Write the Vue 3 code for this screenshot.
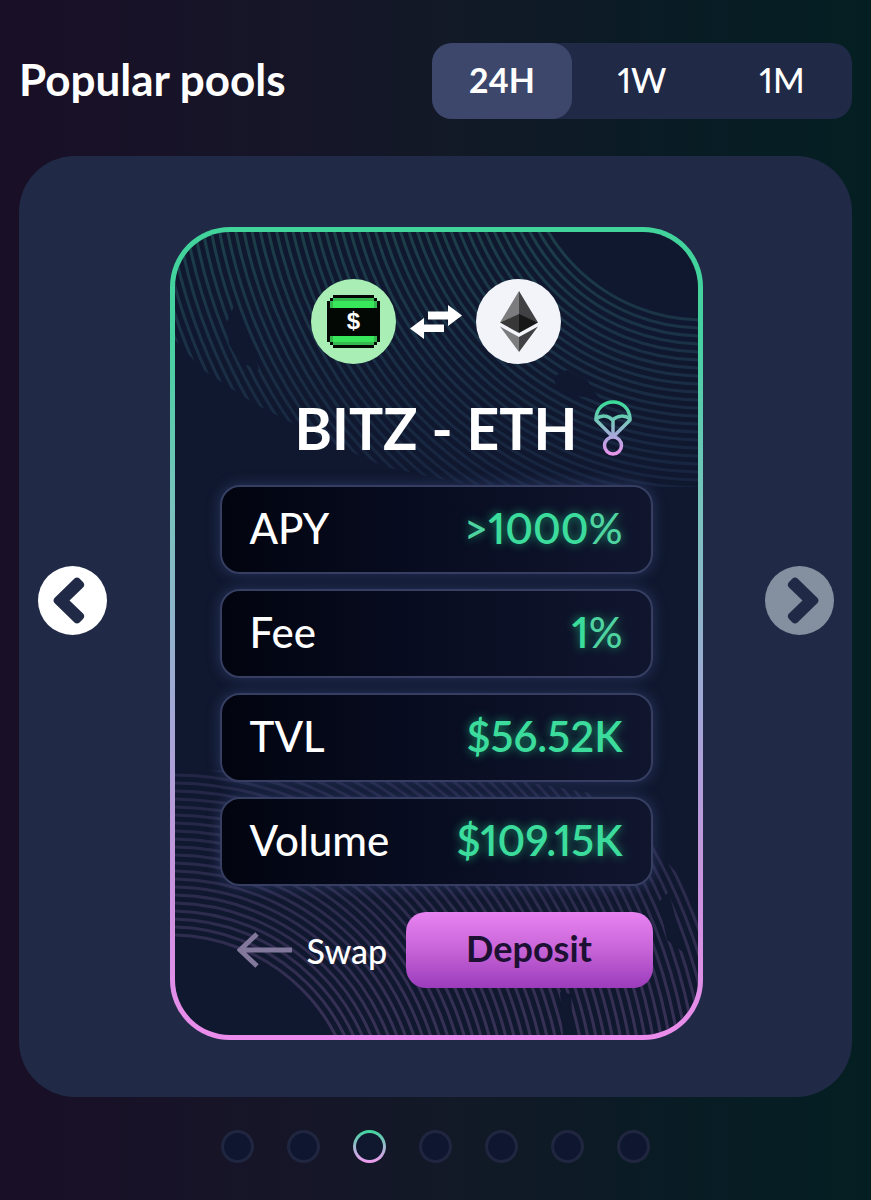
<script setup>
import { ref } from 'vue'

const periods = ['24H', '1W', '1M']
const period = ref('24H')
const slide = ref(2)
const stats = [
  { label: 'APY', prefix: '>', value: '1000', suffix: '%' },
  { label: 'Fee', prefix: '', value: '1', suffix: '%' },
  { label: 'TVL', prefix: '', value: '$56.52K', suffix: '' },
  { label: 'Volume', prefix: '', value: '$109.15K', suffix: '' }
]
const topRings = Array.from({ length: 49 }, (_, i) => 180 + i * 8)
const bottomRings = Array.from({ length: 48 }, (_, i) => 185 + i * 8)
</script>

<template>
  <main class="page">
    <header class="head">
      <h1>Popular pools</h1>
      <div class="tabs" role="group" aria-label="Period">
        <button
          v-for="p in periods"
          :key="p"
          type="button"
          :class="{ active: p === period }"
          :aria-pressed="p === period"
          @click="period = p"
        >{{ p }}</button>
      </div>
    </header>

    <section class="panel">
      <button class="nav" type="button" aria-label="Previous pool">
        <svg viewBox="0 0 69 69">
          <circle cx="34.5" cy="34.5" r="34.5" fill="#fff" />
          <path d="M36.5 12.5Q39 10.500 41.500 12.500L45 16Q47.500 19 45 21.500L31.500 34.500L45 47.500Q47.500 50 45 53L41.500 56.500Q39 58.500 36.500 56.500L16.500 37Q14.500 34.500 16.500 32Z" fill="#202a47" />
        </svg>
      </button>

      <article class="card">
        <svg class="waves" viewBox="0 0 523 803" preserveAspectRatio="none" aria-hidden="true">
          <defs>
            <linearGradient id="wt" gradientUnits="userSpaceOnUse" x1="0" y1="0" x2="0" y2="255">
              <stop offset="0" stop-color="#2c7a70" stop-opacity=".4" />
              <stop offset=".5" stop-color="#2c5c70" stop-opacity=".34" />
              <stop offset="1" stop-color="#34507a" stop-opacity=".2" />
            </linearGradient>
            <linearGradient id="wb" gradientUnits="userSpaceOnUse" x1="0" y1="540" x2="0" y2="803">
              <stop offset="0" stop-color="#5a5084" stop-opacity=".25" />
              <stop offset="1" stop-color="#7a5a96" stop-opacity=".38" />
            </linearGradient>
            <clipPath id="ct"><path d="M0 0H523V255L400 255L290 252L210 235L150 208L80 172L28 138L0 108Z" /></clipPath>
            <clipPath id="cb"><path d="M0 540L60 538L160 545L340 548L420 562L470 605L523 665V803H0Z" /></clipPath>
          </defs>
          <g clip-path="url(#ct)" fill="none" stroke="url(#wt)" stroke-width="3">
            <circle v-for="r in topRings" :key="r" cx="528" cy="-92" :r="r" />
          </g>
          <g clip-path="url(#cb)" fill="none" stroke="url(#wb)" stroke-width="3">
            <circle v-for="r in bottomRings" :key="r" cx="-4" cy="888" :r="r" />
          </g>
          <g fill="#10182f">
            <path d="M52 90L60 72L68 90L78 118L84 138L64 130L54 112Z" />
            <path d="M378 145L392 138L412 148L424 166L398 164L382 155Z" />
            <path d="M484 670L494 660L504 700L508 720L492 708Z" />
            <path d="M385 760L396 762L398 803H388Z" />
          </g>
        </svg>

        <div class="coins">
          <svg class="coin" viewBox="0 0 85 85" role="img" aria-label="BITZ">
            <circle cx="42.500" cy="42.500" r="42.500" fill="#a9eeb5" />
            <path d="M22 16H63V19H66V22H69V63H66V66H63V69H22V66H19V63H16V22H19V19H22Z" fill="#030805" />
            <path d="M22 19H63V22H66V29H19V22H22ZM19 57H66V63H63V66H22V63H19Z" fill="#39e75a" />
            <path d="M22 19H63V22H22ZM22 63H63V66H22ZM19 22H22V29H19ZM63 22H66V29H63ZM19 57H22V63H19ZM63 57H66V63H63Z" fill="#35b84d" />
            <text class="dollar" x="42.500" y="50" text-anchor="middle">$</text>
          </svg>
          <svg class="switch" viewBox="0 0 52 34" aria-hidden="true">
            <path d="M38 0L52 10.500L38 21V14.500H18V6.500H38ZM14 13V19.500H34V27H14V34L0 23.500Z" fill="#fff" />
          </svg>
          <svg class="coin" viewBox="0 0 85 85" role="img" aria-label="ETH">
            <circle cx="42.500" cy="42.500" r="42.500" fill="#f3f4fa" />
            <path d="M43 12L24 43.500L43 36Z" fill="#7c7c7e" />
            <path d="M43 12L62 43.500L43 36Z" fill="#414143" />
            <path d="M24 43.500L43 35V54Z" fill="#383838" />
            <path d="M62 43.500L43 35V54Z" fill="#171717" />
            <path d="M24 47.500L43 58V73Z" fill="#7c7c7e" />
            <path d="M62 47.500L43 58V73Z" fill="#414143" />
          </svg>
        </div>

        <div class="title">
          <h2>BITZ - ETH</h2>
          <svg class="drop" viewBox="0 0 38 56" role="img" aria-label="Airdrop">
            <defs>
              <linearGradient id="dg" gradientUnits="userSpaceOnUse" x1="0" y1="0" x2="0" y2="56">
                <stop offset="0" stop-color="#35dc94" />
                <stop offset=".4" stop-color="#7ac6bd" />
                <stop offset=".65" stop-color="#aaa7dc" />
                <stop offset="1" stop-color="#ef93ed" />
              </linearGradient>
            </defs>
            <g fill="none" stroke="url(#dg)" stroke-width="3.500" stroke-linejoin="round">
              <path d="M2 18C3 8 10 2 19 2S35 8 36 18V20L20 36H18L2 20Z" />
              <path d="M2 19C7 15 14 15 18.500 20C24 15 31 15 36 19M19 19V36.500" />
              <circle cx="19" cy="45.500" r="8.500" />
            </g>
          </svg>
        </div>

        <dl class="stats">
          <div v-for="s in stats" :key="s.label" class="stat">
            <dt>{{ s.label }}</dt>
            <dd><span v-if="s.prefix">{{ s.prefix }}</span><b>{{ s.value }}</b><span v-if="s.suffix">{{ s.suffix }}</span></dd>
          </div>
        </dl>

        <div class="actions">
          <a class="swap" href="#swap">
            <svg viewBox="0 0 56 36" aria-hidden="true">
              <path d="M55 18H4M20 2L3 18L20 34" fill="none" stroke="#81789b" stroke-width="5" />
            </svg>
            Swap
          </a>
          <button class="deposit" type="button">Deposit</button>
        </div>
      </article>

      <button class="nav" type="button" aria-label="Next pool">
        <svg viewBox="0 0 69 69">
          <circle cx="34.500" cy="34.500" r="34.500" fill="#8490a0" />
          <path d="M32.500 12.500Q30 10.500 27.500 12.500L24 16Q21.500 19 24 21.500L37.500 34.500L24 47.500Q21.500 50 24 53L27.500 56.500Q30 58.500 32.500 56.500L52.500 37Q54.500 34.500 52.500 32Z" fill="#202a47" />
        </svg>
      </button>
    </section>

    <nav class="dots" aria-label="Pools">
      <button
        v-for="n in 7"
        :key="n"
        type="button"
        :class="{ on: n - 1 === slide }"
        :aria-label="'Pool ' + n"
        @click="slide = n - 1"
      ></button>
    </nav>
  </main>
</template>

<style>
body {
  margin: 0;
  background: #131827;
}
</style>

<style scoped>
.page {
  box-sizing: border-box;
  min-height: 100vh;
  padding: 43px 19px 37px;
  background: linear-gradient(90deg, #190f26 0%, #171428 25%, #121927 52%, #081c24 80%, #041f22 100%);
  color: #fff;
  font-family: Lato, "Noto Sans", sans-serif;
  font-weight: 500;
  font-variant-numeric: proportional-nums;
}
button {
  border: 0;
  padding: 0;
  background: none;
  color: inherit;
  font: inherit;
  font-variant-numeric: inherit;
  cursor: pointer;
}
svg {
  display: block;
}
.head {
  display: flex;
  align-items: center;
  justify-content: space-between;
  margin-bottom: 37px;
}
h1 {
  margin: 0;
  padding-bottom: 4px;
  font-size: 44px;
  line-height: 72px;
  font-weight: 700;
}
.tabs {
  display: grid;
  grid-template-columns: repeat(3, 1fr);
  width: 420px;
  border-radius: 20px;
  background: #202946;
}
.tabs button {
  height: 76px;
  padding-bottom: 4px;
  border-radius: 20px;
  font-size: 34px;
}
.tabs .active {
  background: #3c476b;
  font-weight: 700;
}
.panel {
  display: flex;
  align-items: center;
  justify-content: space-between;
  padding: 71px 18px 57px 19px;
  border-radius: 56px;
  background: #202a47;
}
.nav {
  flex: none;
  width: 69px;
  margin-bottom: 66px;
}
.card {
  position: relative;
  box-sizing: border-box;
  flex: 0 1 533px;
  padding: 47px 45px;
  border: 5px solid transparent;
  border-radius: 60px;
  background:
    linear-gradient(#10182f, #10182f) padding-box,
    linear-gradient(180deg, #41d49b 0%, #46d0a0 14%, #78c3bd 34%, #a3a6d6 60%, #c794de 80%, #ec8cec 100%) border-box;
}
.waves {
  position: absolute;
  inset: 0;
  width: 100%;
  height: 100%;
  border-radius: 55px;
}
.coins,
.title,
.stats,
.actions {
  position: relative;
}
.coins {
  display: flex;
  align-items: center;
  justify-content: center;
  gap: 14px;
}
.coin {
  width: 85px;
}
.dollar {
  fill: #fff;
  font-family: "Liberation Mono", monospace;
  font-size: 24px;
  font-weight: 700;
}
.switch {
  width: 52px;
}
.title {
  display: grid;
  grid-template-columns: 1fr auto 1fr;
  align-items: center;
  margin: 28px 0 21px;
}
h2 {
  grid-column: 2;
  margin: 0;
  font-size: 57px;
  line-height: 72px;
  font-weight: 700;
}
.drop {
  width: 38px;
  margin-left: 16px;
}
.stats {
  display: grid;
  gap: 15px;
  margin: 0;
}
.stat {
  box-sizing: border-box;
  display: flex;
  align-items: center;
  justify-content: space-between;
  height: 89px;
  padding: 0 28px 4px;
  border: 2px solid #363f62;
  border-radius: 20px;
  background: linear-gradient(90deg, #02040f 0%, #070c20 45%, #11162f 100%);
  box-shadow: 0 0 14px rgba(72, 88, 150, 0.45);
  font-size: 42px;
}
dd {
  margin: 0;
  color: #4fd3a0;
  text-shadow: 0 0 10px rgba(32, 200, 130, 0.7);
}
dd b {
  color: #3bdc9c;
  font-weight: 600;
}
.actions {
  display: flex;
  align-items: center;
  justify-content: space-between;
  margin-top: 26px;
}
.swap {
  display: flex;
  align-items: center;
  gap: 14px;
  margin-left: 17px;
  color: inherit;
  font-size: 34px;
  text-decoration: none;
}
.swap svg {
  width: 56px;
}
.deposit {
  width: 247px;
  height: 76px;
  padding-bottom: 4px;
  border-radius: 20px;
  background: linear-gradient(180deg, #e983f2 0%, #c865d8 48%, #9c3cbc 100%);
  color: #1c1033;
  font-size: 36px;
  font-weight: 700;
}
.dots {
  display: flex;
  justify-content: center;
  gap: 33px;
  margin-top: 33px;
}
.dots button {
  box-sizing: border-box;
  width: 33px;
  height: 33px;
  border: 3px solid transparent;
  border-radius: 50%;
  background:
    linear-gradient(#0f1730, #0f1730) padding-box,
    linear-gradient(#20263f, #20263f) border-box;
}
.dots .on {
  background:
    linear-gradient(#10182f, #10182f) padding-box,
    linear-gradient(180deg, #3ad69b 0%, #a9b6d4 55%, #f29af0 100%) border-box;
}
</style>
